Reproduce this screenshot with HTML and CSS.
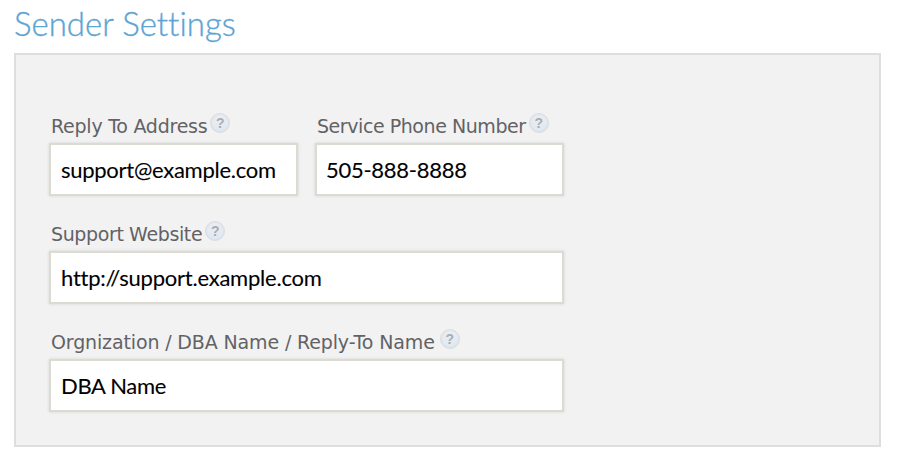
FILE: index.html
```html
<!DOCTYPE html>
<html lang="en">
<head>
<meta charset="utf-8">
<title>Sender Settings</title>
<link rel="stylesheet" href="styles.css">
</head>
<body>
<h1>Sender Settings</h1>
<form class="panel">
  <div class="row">
    <div class="field half">
      <div class="label"><label for="reply" class="l1">Reply To Address</label><span class="help">?</span></div>
      <input id="reply" class="i1" type="text" value="support@example.com">
    </div>
    <div class="field half">
      <div class="label"><label for="phone" class="l2">Service Phone Number</label><span class="help">?</span></div>
      <input id="phone" class="i2" type="text" value="505-888-8888">
    </div>
  </div>
  <div class="field">
    <div class="label"><label for="site" class="l3">Support Website</label><span class="help">?</span></div>
    <input id="site" class="i3" type="text" value="http://support.example.com">
  </div>
  <div class="field">
    <div class="label"><label for="dba" class="l4">Orgnization / DBA Name / Reply-To Name</label><span class="help">?</span></div>
    <input id="dba" class="i4" type="text" value="DBA Name">
  </div>
</form>
</body>
</html>
```

FILE: styles.css
```css
* { box-sizing: border-box; }
body { margin: 0; padding: 0 26px 0 14px; background: #fff; }
h1 {
  margin: 0;
  height: 53px;
  font: 300 33px/46px Lato, sans-serif;
  font-variant-ligatures: none;
  -webkit-text-stroke: 0.35px #5da4d3;
  color: #5da4d3;
}
.panel {
  width: 867px;
  height: 394px;
  padding: 56px 33px 0;
  border: 2px solid #dedede;
  background: #f2f2f2;
}
.row { display: flex; gap: 17px; }
.field { width: 515px; height: 108px; }
.half { width: 249px; }
.label {
  display: flex;
  height: 32px;
  padding-left: 2px;
  font: 19px/31px "DejaVu Sans", sans-serif;
  color: #626266;
  white-space: nowrap;
}
.l1 { letter-spacing: -0.25px; }
.l2 { letter-spacing: -0.44px; }
.l3 { letter-spacing: -0.38px; }
.l4 { letter-spacing: -0.14px; }
.help {
  width: 20px;
  height: 20px;
  margin: 2px 0 0 3px;
  border: 1px solid #d9dce2;
  border-radius: 50%;
  background: linear-gradient(#eceef2, #e0e8f0);
  box-shadow: inset 0 0 2px #d0d7e0;
  font: bold 14px/18px "Liberation Sans", sans-serif;
  color: #a7adb5;
  text-align: center;
}
.l4 + .help { margin-left: 5px; }
input {
  display: block;
  width: 100%;
  height: 53px;
  padding: 0 10px 1px;
  border: 2px solid #dbdbd1;
  box-shadow: 0 0 3px rgba(0, 0, 0, 0.12);
  background: #fff;
  font: 22px Lato, sans-serif;
  font-variant-ligatures: none;
  letter-spacing: -0.27px;
  -webkit-text-stroke: 0.1px #000;
  color: #000;
}
.i2 { padding-left: 9px; }
.i3 { letter-spacing: -0.23px; }
.i4 { letter-spacing: -0.33px; }
```
